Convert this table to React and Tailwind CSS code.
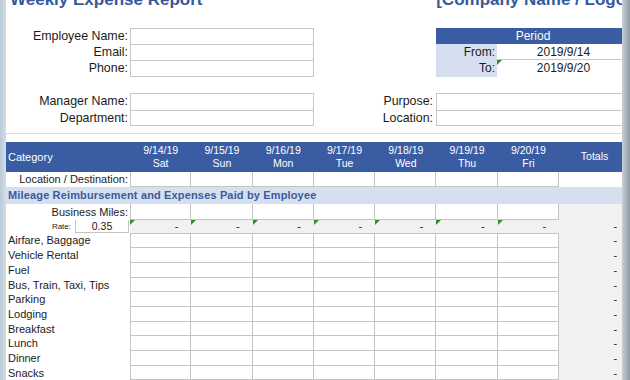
import React from 'react';

const days = [
  { date: '9/14/19', day: 'Sat' },
  { date: '9/15/19', day: 'Sun' },
  { date: '9/16/19', day: 'Mon' },
  { date: '9/17/19', day: 'Tue' },
  { date: '9/18/19', day: 'Wed' },
  { date: '9/19/19', day: 'Thu' },
  { date: '9/20/19', day: 'Fri' },
];

const expenses = [
  'Airfare, Baggage',
  'Vehicle Rental',
  'Fuel',
  'Bus, Train, Taxi, Tips',
  'Parking',
  'Lodging',
  'Breakfast',
  'Lunch',
  'Dinner',
  'Snacks',
];

const cols = 'grid grid-cols-[124px_repeat(7,61.3px)_71px]';

// small green marker in the corner of an excel cell
function Flag() {
  return (
    <span className="absolute top-0 left-0 w-0 h-0 border-t-[5px] border-r-[5px] border-t-[#2e8b2e] border-r-transparent" />
  );
}

function FormRow({ label, last }) {
  return (
    <div className="flex h-[16.4px]">
      <div className="w-[124px] pr-[2px] text-right text-[12.4px] leading-[16px]">{label}</div>
      <div className={`w-[184px] bg-white border-x border-t border-[#c6c6c6] ${last ? 'border-b' : ''}`}></div>
    </div>
  );
}

export default function App() {
  return (
    <div
      className="flex w-[630px] h-[380px] overflow-hidden bg-white text-[#1b1b1b]"
      style={{ fontFamily: '"Liberation Sans", Arial, sans-serif' }}
    >
      {/* left window edge */}
      <div className="w-[6px] shrink-0 bg-gradient-to-r from-[#b9cad6] to-[#d4dfe7]"></div>

      <div className="flex-1 overflow-hidden">
        <div className="w-[624px]">
          {/* titles */}
          <div className="flex h-[27.5px] text-[17px] font-bold leading-[20px] text-[#34599e] whitespace-nowrap">
            <div className="w-[434px] pl-[4px] -mt-[10px]">Weekly Expense Report</div>
            <div className="-mt-[10px] overflow-hidden">[Company Name / Logo]</div>
          </div>

          {/* employee + period */}
          <div className="flex">
            <div>
              <FormRow label="Employee Name:" />
              <FormRow label="Email:" />
              <FormRow label="Phone:" last />
            </div>
            <div className="ml-[122px] w-[194px] text-[12px]">
              <div className="h-[16.4px] bg-[#3a5ca3] text-white text-center leading-[16px]">Period</div>
              <div className="flex h-[16.4px]">
                <div className="w-[61px] bg-[#d6dff0] text-right pr-[2px] leading-[16px]">From:</div>
                <div className="flex-1 border-b border-[#c6c6c6] text-center leading-[16px]">2019/9/14</div>
              </div>
              <div className="flex h-[16.4px]">
                <div className="w-[61px] bg-[#d6dff0] text-right pr-[2px] leading-[16px]">To:</div>
                <div className="relative flex-1 text-center leading-[16px]">
                  <Flag />
                  2019/9/20
                </div>
              </div>
            </div>
          </div>

          {/* manager + purpose */}
          <div className="flex mt-[16.5px]">
            <div>
              <FormRow label="Manager Name:" />
              <FormRow label="Department:" last />
            </div>
            <div className="w-[122px] text-[12.4px]">
              <div className="h-[16.4px] pr-[3px] text-right leading-[16px]">Purpose:</div>
              <div className="h-[16.4px] pr-[3px] text-right leading-[16px]">Location:</div>
            </div>
            <div className="w-[194px]">
              <div className="h-[16.4px] border-x border-t border-[#c6c6c6]"></div>
              <div className="h-[16.4px] border border-[#c6c6c6]"></div>
            </div>
          </div>

          <div className="mt-[7px] h-px bg-[#dcdcdc]"></div>

          {/* expense table */}
          <div className="mt-[8px] text-[11px]">
            <div className={`${cols} h-[30px] bg-[#3a5ca3] text-white`}>
              <div className="flex items-center pl-[2px]">Category</div>
              {days.map((d) => (
                <div key={d.date} className="flex flex-col items-center justify-center leading-[13px] text-[10.5px]">
                  <span>{d.date}</span>
                  <span>{d.day}</span>
                </div>
              ))}
              <div className="flex items-center justify-center text-[10.5px]">Totals</div>
            </div>

            <div className={`${cols} h-[15px]`}>
              <div className="pr-[2px] text-right leading-[15px]">Location / Destination:</div>
              {days.map((d, i) => (
                <div key={d.date} className={`border-r border-b border-[#c4c4c4] ${i === 0 ? 'border-l' : ''}`}></div>
              ))}
              <div></div>
            </div>

            <div className="h-[17px] bg-[#d6dff0] pl-[2px] font-bold text-[#3a5a9c] leading-[17px] tracking-[0.15px]">
              Mileage Reimbursement and Expenses Paid by Employee
            </div>

            <div className={`${cols} h-[16px]`}>
              <div className="pr-[2px] text-right leading-[16px]">Business Miles:</div>
              {days.map((d, i) => (
                <div key={d.date} className={`border-r border-b border-[#c4c4c4] ${i === 0 ? 'border-l' : ''}`}></div>
              ))}
              <div className="bg-[#f1f1f1]"></div>
            </div>

            <div className={`${cols} h-[13.5px] bg-[#f1f1f1]`}>
              <div className="flex bg-white">
                <div className="w-[69px] pr-[4px] text-right text-[8px] leading-[13px]">Rate:</div>
                <div className="flex-1 mr-[1px] border-x border-b border-[#c4c4c4] text-center leading-[12px] text-[10.5px]">0.35</div>
              </div>
              {days.map((d) => (
                <div key={d.date} className="relative pr-[13px] text-right leading-[13px]">
                  <Flag />-
                </div>
              ))}
              <div className="pr-[13px] text-right leading-[13px]">-</div>
            </div>

            {expenses.map((name, r) => (
              <div key={name} className={`${cols} h-[14.7px]`}>
                <div className="pl-[2px] leading-[14px] whitespace-nowrap">{name}</div>
                {days.map((d, i) => (
                  <div
                    key={d.date}
                    className={`border-r border-b border-[#c4c4c4] ${i === 0 ? 'border-l' : ''} ${r === 0 ? 'border-t' : ''}`}
                  ></div>
                ))}
                <div className="bg-[#f1f1f1] pr-[13px] text-right leading-[14px]">-</div>
              </div>
            ))}
          </div>
        </div>
      </div>

      {/* right window edge */}
      <div className="w-[8px] shrink-0 bg-gradient-to-r from-[#c9d0d6] to-[#8f9aa3]"></div>
    </div>
  );
}
